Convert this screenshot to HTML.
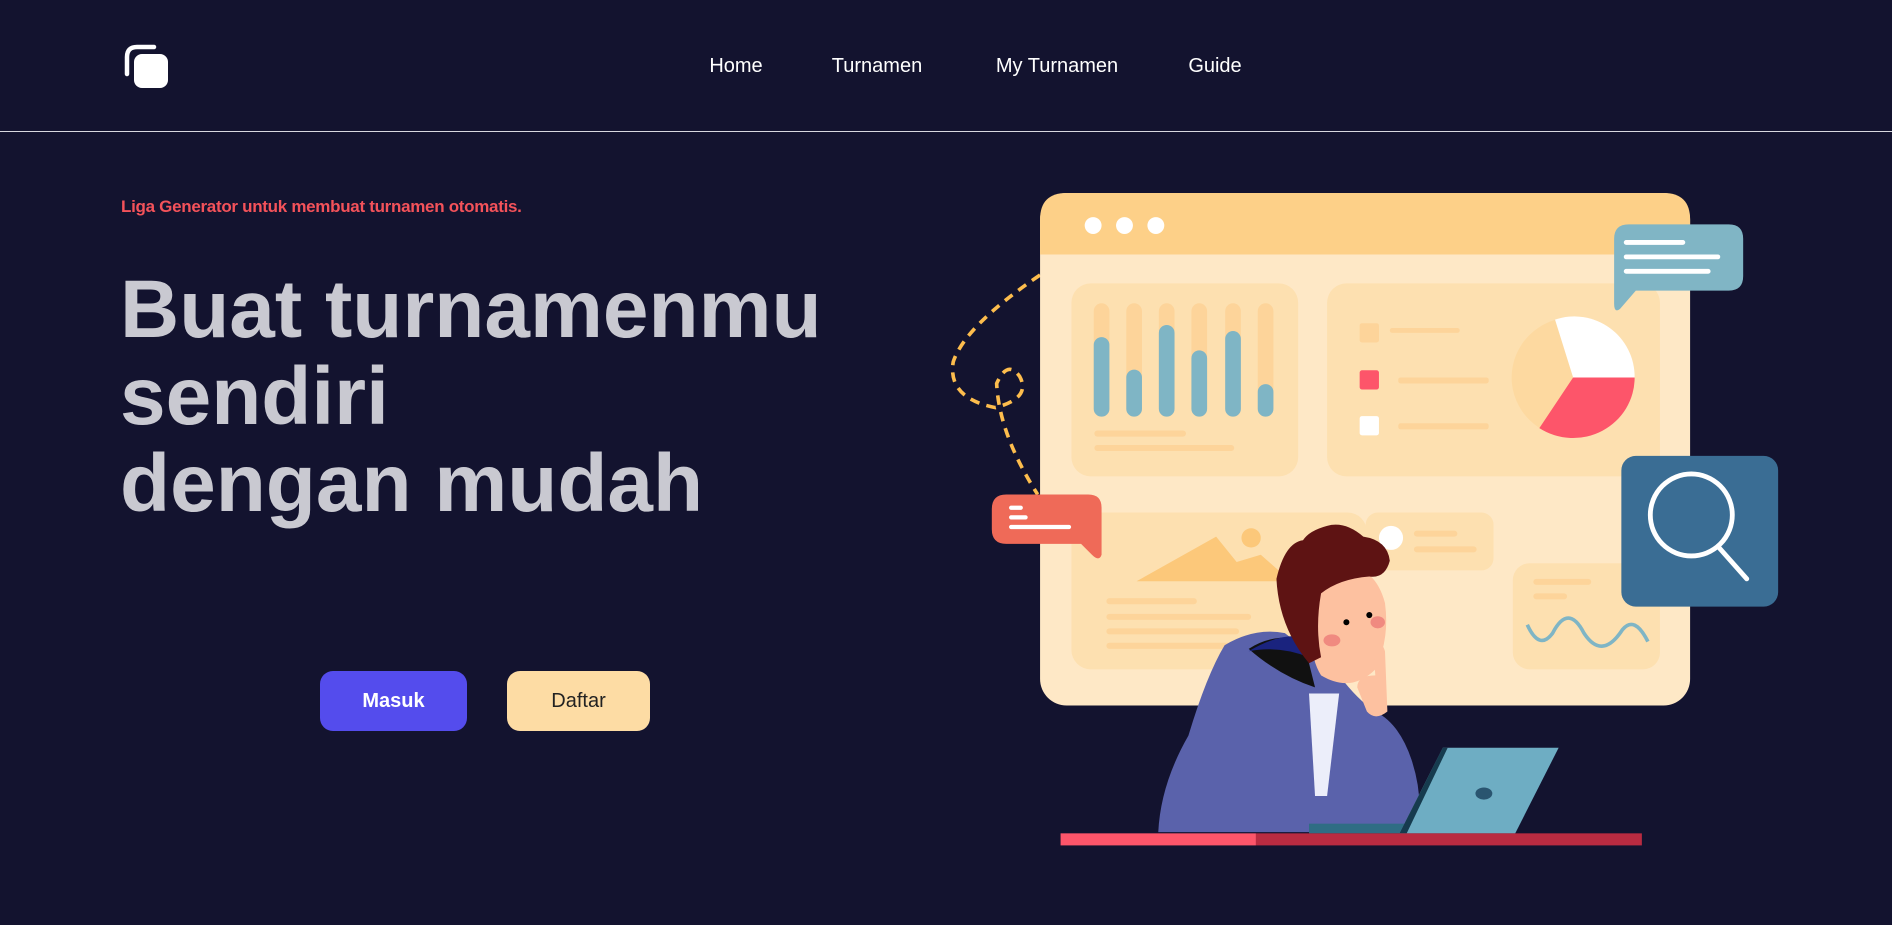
<!DOCTYPE html>
<html><head><meta charset="utf-8"><style>
html,body{margin:0;padding:0;background:#13132f;width:1892px;height:925px;overflow:hidden;font-family:"Liberation Sans",sans-serif}
.nav a{position:absolute;top:55px;color:#fff;font-size:20px;text-decoration:none;transform:translateX(-50%)}
.line{position:absolute;left:0;top:131px;width:1892px;height:1px;background:#d8d8e0}
.tag{position:absolute;left:121px;top:197px;color:#f4525a;font-weight:bold;font-size:17px;letter-spacing:-0.3px}
h1{position:absolute;left:120px;top:266px;margin:0;color:#c9c9d1;font-size:82px;line-height:87px;font-weight:bold;letter-spacing:0px}
.btn{position:absolute;top:671px;height:60px;border-radius:13px;display:flex;align-items:center;justify-content:center;font-size:20px}
svg.ill{position:absolute;left:0;top:0}
</style></head><body>
<svg style="position:absolute;left:124px;top:44px" width="46" height="44" viewBox="0 0 46 44"><path d="M3 30 V13 Q3 3 13 3 H30" stroke="#fff" stroke-width="4.5" fill="none" stroke-linecap="round"/><rect x="10" y="10" width="34" height="34" rx="8" fill="#fff"/></svg>
<div class="nav"><a style="left:736px">Home</a><a style="left:877px">Turnamen</a><a style="left:1057px">My Turnamen</a><a style="left:1215px">Guide</a></div>
<div class="line"></div>
<div class="tag">Liga Generator untuk membuat turnamen otomatis.</div>
<h1>Buat turnamenmu<br>sendiri<br>dengan mudah</h1>
<div class="btn" style="left:320px;width:147px;background:#544ced;color:#fff;font-weight:bold">Masuk</div>
<div class="btn" style="left:507px;width:143px;background:#fddca4;color:#222">Daftar</div>
<svg class="ill" width="1892" height="925" viewBox="0 0 1568 767">
<path d="M862 228 Q800 270 790 300 Q785 330 825 338 Q855 330 845 312 Q835 298 826 318 Q828 360 860 410" stroke="#fdbd4d" stroke-width="3" fill="none" stroke-dasharray="8 6"/>
<rect x="862" y="160" width="539" height="425" rx="22" fill="#fee8c6"/>
<path d="M884 160 H1379 Q1401 160 1401 182 V211 H862 V182 Q862 160 884 160Z" fill="#fdd088"/>
<circle cx="906" cy="187" r="7" fill="#fff"/><circle cx="932" cy="187" r="7" fill="#fff"/><circle cx="958" cy="187" r="7" fill="#fff"/>
<rect x="888" y="235" width="188" height="160" rx="16" fill="#fde0b0"/>
<g stroke-linecap="round" stroke-width="13">
<g stroke="#fdd49a"><path d="M913 258V339M940 258V339M967 258V339M994 258V339M1022 258V339M1049 258V339"/></g>
<g stroke="#7fb5c5"><path d="M913 286V339M940 313V339M967 276V339M994 297V339M1022 281V339M1049 325V339"/></g>
</g>
<rect x="907" y="357" width="76" height="5" rx="2.5" fill="#fdd49a"/><rect x="907" y="369" width="116" height="5" rx="2.5" fill="#fdd49a"/>
<rect x="1100" y="235" width="276" height="160" rx="16" fill="#fde0b0"/>
<rect x="1127" y="268" width="16" height="16" rx="2" fill="#fdd49a"/><rect x="1127" y="307" width="16" height="16" rx="2" fill="#fd556a"/><rect x="1127" y="345" width="16" height="16" rx="2" fill="#fff"/>
<rect x="1152" y="272" width="58" height="4" rx="2" fill="#fdd49a"/><rect x="1159" y="313" width="75" height="5" rx="2" fill="#fdd49a"/><rect x="1159" y="351" width="75" height="5" rx="2" fill="#fdd49a"/>
<ellipse cx="1304" cy="313" rx="51" ry="50" fill="#fdd9a0"/>
<path d="M1304 313 L1289 265 A50 50 0 0 1 1355 313Z" fill="#fff"/>
<path d="M1304 313 L1355 313 A51 50 0 0 1 1276 355Z" fill="#fd556a"/>
<rect x="888" y="425" width="245" height="130" rx="16" fill="#fde0b0"/>
<path d="M942 482 L1008 445 L1025 466 L1045 460 L1070 482Z" fill="#fcc87a"/><circle cx="1037" cy="446" r="8" fill="#fcc87a"/>
<rect x="917" y="496" width="75" height="5" rx="2.5" fill="#fdd49a"/><rect x="917" y="509" width="120" height="5" rx="2.5" fill="#fdd49a"/><rect x="917" y="521" width="110" height="5" rx="2.5" fill="#fdd49a"/><rect x="917" y="533" width="110" height="5" rx="2.5" fill="#fdd49a"/>
<rect x="1132" y="425" width="106" height="48" rx="10" fill="#fde0b0"/><circle cx="1153" cy="446" r="10" fill="#fff"/>
<rect x="1172" y="440" width="36" height="5" rx="2.5" fill="#fdd49a"/><rect x="1172" y="453" width="52" height="5" rx="2.5" fill="#fdd49a"/>
<rect x="1254" y="467" width="122" height="88" rx="14" fill="#fde0b0"/>
<rect x="1271" y="480" width="48" height="5" rx="2.5" fill="#fdd49a"/><rect x="1271" y="492" width="28" height="5" rx="2.5" fill="#fdd49a"/>
<path d="M1266 518 Q1276 540 1287 525 Q1300 500 1313 525 Q1328 548 1345 522 Q1355 510 1366 532" stroke="#7fb5c5" stroke-width="3" fill="none"/>
<path d="M1338 186 H1433 Q1445 186 1445 198 V229 Q1445 241 1433 241 H1356 L1343 256 Q1338 260 1338 252 V198 Q1338 186 1350 186Z" fill="#80b5c5"/>
<g stroke="#fff" stroke-width="4" stroke-linecap="round"><path d="M1348 201H1395M1348 213H1424M1348 225H1416"/></g>
<rect x="1344" y="378" width="130" height="125" rx="12" fill="#3a6d94"/>
<circle cx="1402" cy="427" r="34" stroke="#fff" stroke-width="4" fill="none"/><path d="M1424 453 L1448 480" stroke="#fff" stroke-width="4" stroke-linecap="round"/>
<path d="M834 410 H902 Q913 410 913 421 V460 Q911 466 905 460 L896 451 H834 Q822 451 822 439 V422 Q822 410 834 410Z" fill="#ef6a58"/>
<g stroke="#fff" stroke-width="3.5" stroke-linecap="round"><path d="M838 421H846M838 429H850M838 437H886"/></g>
<path d="M960 690 Q962 650 985 610 Q1000 560 1015 535 Q1040 520 1065 525 L1110 560 Q1125 580 1140 590 Q1160 600 1170 630 Q1180 660 1175 690Z" fill="#5a62ab"/>
<path d="M1035 538 Q1055 525 1080 530 L1090 570 Q1060 560 1035 538Z" fill="#111"/>
<path d="M1085 575 L1110 575 L1100 660 L1090 660Z" fill="#eceefa"/>
<path d="M1035 540 Q1060 525 1080 528 L1085 545 Q1060 535 1035 540Z" fill="#1a237e"/>
<path d="M1088 490 Q1090 470 1115 470 Q1140 470 1148 500 Q1152 530 1140 555 Q1120 575 1095 560 Q1082 540 1088 490Z" fill="#fdc1a0"/>
<path d="M1138 535 Q1145 530 1148 540 L1150 590 Q1140 598 1133 590 L1125 570 Q1125 560 1140 560Z" fill="#fdc1a0"/>
<path d="M1085 550 Q1060 520 1058 480 Q1065 450 1080 448 Q1085 440 1100 436 Q1115 432 1130 445 Q1150 448 1152 465 Q1148 480 1135 478 Q1110 480 1095 492 Q1090 520 1095 545Z" fill="#5e1313"/>
<ellipse cx="1104" cy="531" rx="7" ry="5" fill="#f08a80"/><ellipse cx="1142" cy="516" rx="6" ry="5" fill="#f08a80"/>
<circle cx="1116" cy="516" r="2.5" fill="#000"/><circle cx="1135" cy="510" r="2.5" fill="#000"/>
<path d="M1095 660 L1175 660 L1178 690 L1090 690Z" fill="#5a62ab"/>
<rect x="1085" y="683" width="80" height="8" fill="#2f6d84"/>
<path d="M1160 691 L1196 620 L1292 620 L1256 691Z" fill="#6eadc3"/><path d="M1160 691 L1196 620 L1200 620 L1166 691Z" fill="#163b4e"/>
<ellipse cx="1230" cy="658" rx="7" ry="5" fill="#2a5570"/>
<rect x="879" y="691" width="162" height="10" fill="#fd556a"/><rect x="1041" y="691" width="320" height="10" fill="#b92b41"/>
</svg>
</body></html>
